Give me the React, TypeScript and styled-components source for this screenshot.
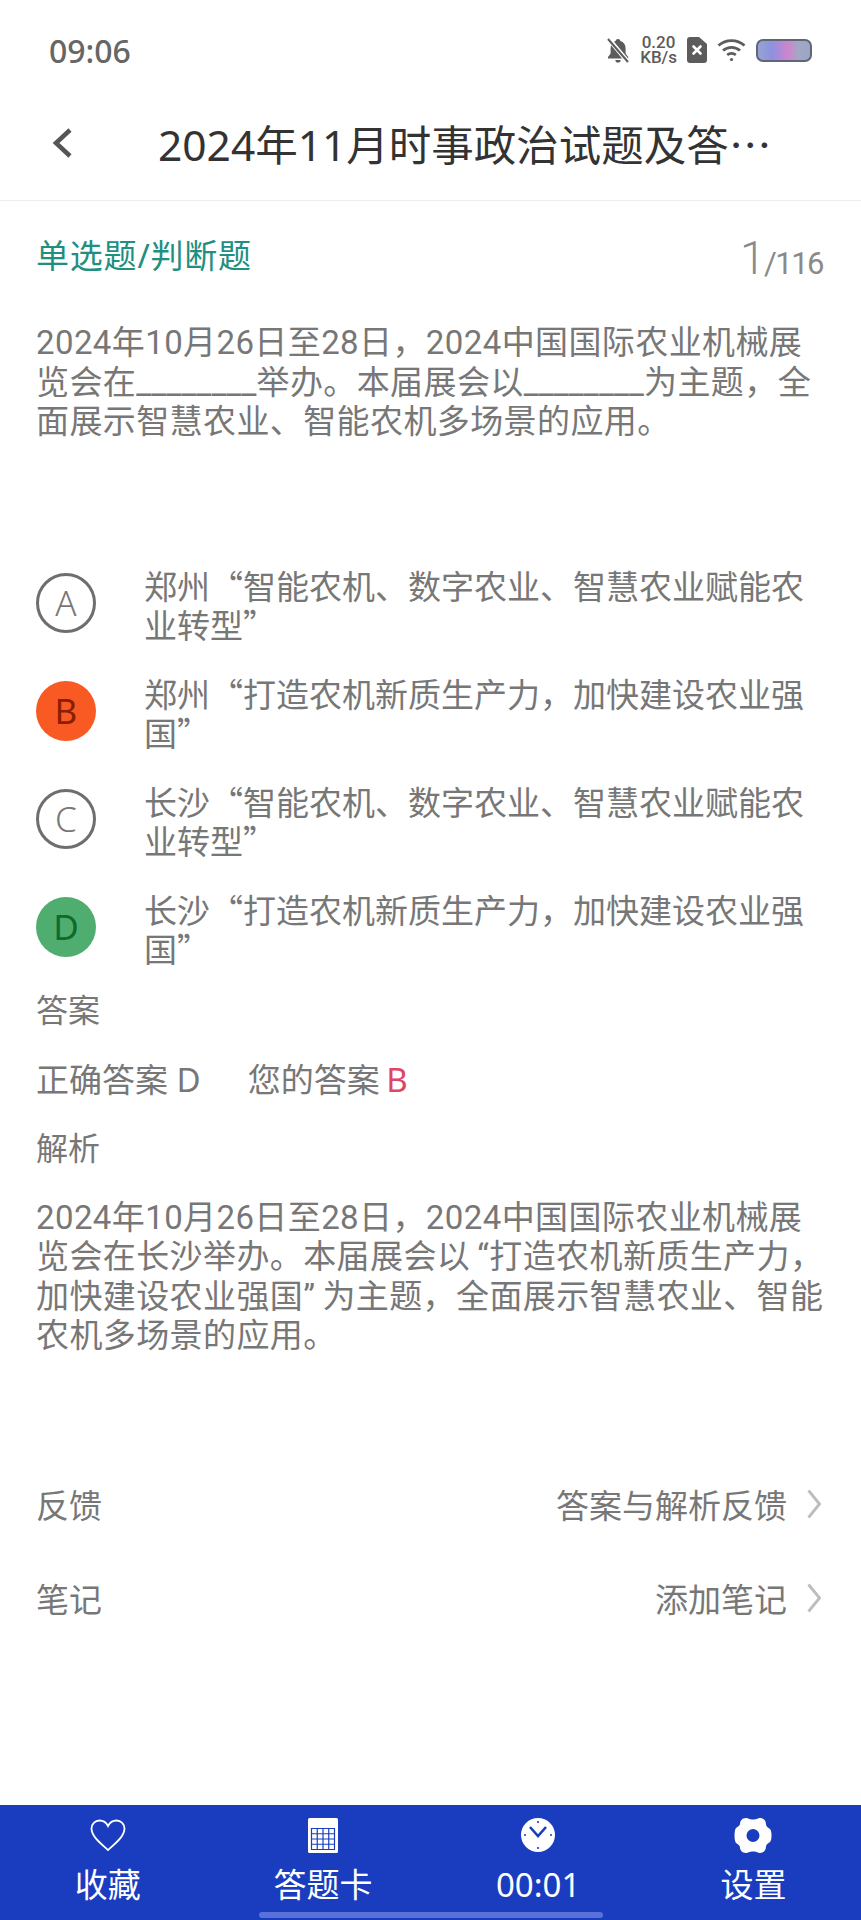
import React from 'react';
import styled, { createGlobalStyle } from 'styled-components';

const options = [
    { key: 'A', text: '郑州“智能农机、数字农业、智慧农业赋能农业转型”', state: 'idle' },
    { key: 'B', text: '郑州“打造农机新质生产力，加快建设农业强国”', state: 'wrong' },
    { key: 'C', text: '长沙“智能农机、数字农业、智慧农业赋能农业转型”', state: 'idle' },
    { key: 'D', text: '长沙“打造农机新质生产力，加快建设农业强国”', state: 'right' },
];

const questionLines = [
    '2024年10月26日至28日，2024中国国际农业机械展',
    '览会在________举办。本届展会以________为主题，全',
    '面展示智慧农业、智能农机多场景的应用。',
];

const analysisLines = [
    '2024年10月26日至28日，2024中国国际农业机械展',
    '览会在长沙举办。本届展会以“打造农机新质生产力，',
    '加快建设农业强国”为主题，全面展示智慧农业、智能',
    '农机多场景的应用。',
];

// the blanks and the quotes have other widths than the plain text around them
const renderLine = (line: string) =>
    line.split(/(_+|“|”)/).map((part, i) => {
        if (part.startsWith('_')) return <Blank key={i}>{part}</Blank>;
        if (part === '“') return <OpenQuote key={i}>{part}</OpenQuote>;
        if (part === '”') return <CloseQuote key={i}>{part}</CloseQuote>;
        return part;
    });

const BellOff = () => (
    <svg width="24" height="27" viewBox="0 0 24 27">
        <path
            fill="#5c5c5c"
            d="M12 2c1.400 0 2.200.8 2.400 2 3.400 1 5.200 3.800 5.200 7.400v5.200l2.600 3.400v1.400H2v-1.400l2.600-3.400v-5.200C4.600 7.800 6.400 5 9.600 4 9.800 2.800 10.600 2 12 2zM9.400 23h5.200a2.600 2.600 0 0 1-5.200 0z"
        />
        <path d="M2 1l20 24" stroke="#fff" strokeWidth="4.500" />
        <path d="M2 2l20 23" stroke="#5c5c5c" strokeWidth="2" />
    </svg>
);

const SimOff = () => (
    <svg width="20" height="26" viewBox="0 0 20 26">
        <path
            fill="#5c5c5c"
            d="M3 0h9l8 7v16a3 3 0 0 1-3 3H3a3 3 0 0 1-3-3V3a3 3 0 0 1 3-3z"
        />
        <path d="M6.500 9.500l7 7m0-7l-7 7" stroke="#fff" strokeWidth="2.600" strokeLinecap="round" />
    </svg>
);

const Wifi = () => (
    <svg width="29" height="24" viewBox="0 0 29 24" fill="none" stroke="#5c5c5c" strokeWidth="2.800">
        <path d="M1.500 7.500c7.500-6.500 18.500-6.500 26 0" />
        <path d="M6 12.500c5-4.300 12-4.300 17 0" />
        <path d="M10.200 17c2.500-2 6.100-2 8.600 0" />
        <circle cx="14.500" cy="21.500" r="1.600" fill="#5c5c5c" stroke="none" />
    </svg>
);

const BackIcon = () => (
    <svg width="22" height="30" viewBox="0 0 22 30" fill="none">
        <path d="M19 2L5 15l14 13" stroke="#555" strokeWidth="4.500" />
    </svg>
);

const ArrowIcon = () => (
    <svg width="14" height="30" viewBox="0 0 14 30" fill="none">
        <path d="M1.500 1.500L12.500 15 1.500 28.500" stroke="#bdbdbd" strokeWidth="2.800" />
    </svg>
);

const HeartIcon = () => (
    <svg width="36" height="33" viewBox="0 0 36 33" fill="none">
        <path
            d="M18 31C10 24 1.500 17 1.500 9.500 1.500 5 5 1.500 9.500 1.500c3.500 0 6.800 2 8.500 5.500 1.700-3.500 5-5.500 8.500-5.500 4.500 0 8 3.500 8 8C34.500 17 26 24 18 31z"
            stroke="#fff"
            strokeWidth="1.800"
        />
    </svg>
);

const GridIcon = () => (
    <svg width="30" height="35" viewBox="0 0 30 35">
        <rect width="30" height="35" rx="1.500" fill="#fff" />
        <path
            fill="none"
            stroke="#1a3dbf"
            strokeWidth="1.200"
            d="M3.500 10.500h23v21h-23zM3.500 15.750h23M3.500 21h23M3.500 26.250h23M9.250 10.500v21M15 10.500v21M20.750 10.500v21"
        />
    </svg>
);

const ClockIcon = () => (
    <svg width="34" height="34" viewBox="0 0 34 34">
        <circle cx="17" cy="17" r="17" fill="#fff" />
        <path d="M9 9l8 9 8-9" fill="none" stroke="#1a3dbf" strokeWidth="2.600" />
        <path d="M17 3v2M17 29v2M3 17h2M29 17h2" stroke="#1a3dbf" strokeWidth="1.600" />
    </svg>
);

const GearIcon = () => (
    <svg width="38" height="37" viewBox="0 0 38 37">
        <path
            fill="#fff"
            fillRule="evenodd"
            d="M12 1c2 0 3 1.500 7 1.500S24 1 26 1c4 0 6 3 6 6.500 0 2 2 3 4 4.500 2 2 2 11 0 13-2 1.500-4 2.500-4 4.500C32 33 30 36 26 36c-2 0-3-1.500-7-1.500S14 36 12 36c-4 0-6-3-6-5.500 0-2-2-3-4-4.500-2-2-2-13 0-15 2-1.500 4-2.500 4-4C6 4 8 1 12 1zM19 12a6.500 6.500 0 1 0 0 13 6.500 6.500 0 0 0 0-13z"
        />
    </svg>
);

const App: React.FC = () => {
    return (
        <Page lang="zh-CN">
            <GlobalStyle />
            <StatusBar>
                <Clock>09:06</Clock>
                <StatusIcons>
                    <BellOff />
                    <Speed>{'0.20\nKB/s'}</Speed>
                    <SimOff />
                    <Wifi />
                    <Battery />
                </StatusIcons>
            </StatusBar>
            <Header>
                <BackIcon />
                <Title>
                    2024年11月时事政治试题及答<TitleDots>…</TitleDots>
                </Title>
            </Header>
            <Main>
                <TypeRow>
                    <TypeLabel>单选题/判断题</TypeLabel>
                    <Count>
                        <CountNow>1</CountNow>/116
                    </Count>
                </TypeRow>
                <Question>
                    {questionLines.map(line => (
                        <TextLine key={line}>{renderLine(line)}</TextLine>
                    ))}
                </Question>
                <OptionList>
                    {options.map(option => (
                        <Option key={option.key}>
                            <Badge $state={option.state}>{option.key}</Badge>
                            <OptionText>{option.text}</OptionText>
                        </Option>
                    ))}
                </OptionList>
                <SectionTitle>答案</SectionTitle>
                <AnswerRow>
                    <span>正确答案 D</span>
                    <span>
                        您的答案 <WrongKey>B</WrongKey>
                    </span>
                </AnswerRow>
                <SectionTitle>解析</SectionTitle>
                <Analysis>
                    {analysisLines.map(line => (
                        <TextLine key={line}>{renderLine(line)}</TextLine>
                    ))}
                </Analysis>
                <LinkRow>
                    <span>反馈</span>
                    <LinkAction>
                        答案与解析反馈
                        <ArrowIcon />
                    </LinkAction>
                </LinkRow>
                <LinkRow>
                    <span>笔记</span>
                    <LinkAction>
                        添加笔记
                        <ArrowIcon />
                    </LinkAction>
                </LinkRow>
            </Main>
            <Footer>
                <FooterItem>
                    <FooterIcon>
                        <HeartIcon />
                    </FooterIcon>
                    收藏
                </FooterItem>
                <FooterItem>
                    <FooterIcon>
                        <GridIcon />
                    </FooterIcon>
                    答题卡
                </FooterItem>
                <FooterItem>
                    <FooterIcon>
                        <ClockIcon />
                    </FooterIcon>
                    00:01
                </FooterItem>
                <FooterItem>
                    <FooterIcon>
                        <GearIcon />
                    </FooterIcon>
                    设置
                </FooterItem>
                <HomeBar />
            </Footer>
        </Page>
    );
};

const GlobalStyle = createGlobalStyle`
    html, body {
        margin: 0;
        padding: 0;
        background: #fff;
    }
    * {
        box-sizing: border-box;
    }
`;

const Page = styled.div`
    display: flex;
    flex-direction: column;
    width: 861px;
    height: 1920px;
    overflow: hidden;
    background: #fff;
    color: #777;
    font-family: 'Noto Sans', 'Noto Sans CJK SC', sans-serif;
    font-size: 33px;
`;

const StatusBar = styled.div`
    display: flex;
    align-items: center;
    justify-content: space-between;
    height: 100px;
    padding: 0 49px;
`;

const Clock = styled.div`
    font-size: 32px;
    font-weight: 500;
    color: #666;
`;

const StatusIcons = styled.div`
    display: flex;
    align-items: center;
    gap: 10px;
`;

const Speed = styled.div`
    color: #5c5c5c;
    font-family: Roboto, sans-serif;
    font-size: 17px;
    font-weight: 500;
    line-height: 15px;
    text-align: center;
    white-space: pre-line;
`;

const Battery = styled.div`
    width: 56px;
    height: 23px;
    border: 2.5px solid #5f6678;
    border-radius: 7px;
    background: linear-gradient(
        90deg,
        #97a3cf 0%,
        #8d92e0 26%,
        #a48cd8 38%,
        #d184cf 58%,
        #a4a6c6 76%,
        #9ca6c2 100%
    );
`;

const Header = styled.div`
    display: flex;
    align-items: center;
    height: 101px;
    padding-left: 51px;
    padding-bottom: 14px;
    border-bottom: 1px solid #ececec;
`;

const Title = styled.div`
    margin-left: 85px;
    margin-top: -2px;
    font-size: 42.5px;
    color: #333;
    white-space: nowrap;
`;

const TitleDots = styled.span`
    font-family: 'Noto Sans CJK SC', sans-serif;
`;

const Main = styled.div`
    display: flex;
    flex: 1;
    flex-direction: column;
    padding: 0 36px;
`;

const TypeRow = styled.div`
    display: flex;
    align-items: flex-start;
    justify-content: space-between;
    height: 122px;
    padding-top: 32px;
`;

const TypeLabel = styled.div`
    color: #1f8f82;
    line-height: 46px;
    letter-spacing: 0.8px;
`;

const Count = styled.div`
    margin: -5px 2px 0 0;
    color: #8a8a8a;
    font-family: Roboto, sans-serif;
    font-size: 31px;
    letter-spacing: -1.5px;
    line-height: 60px;
`;

const CountNow = styled.span`
    font-size: 46px;
    font-weight: 300;
`;

const Question = styled.div`
    line-height: 39.5px;
`;

const TextLine = styled.div`
    font-family: Roboto, 'Noto Sans CJK SC', sans-serif;
    letter-spacing: 0.4px;
    white-space: nowrap;
`;

const Blank = styled.span`
    letter-spacing: 0.15px;
`;

const OpenQuote = styled.span`
    padding-left: 7px;
`;

const CloseQuote = styled.span`
    padding-right: 7px;
`;

const OptionList = styled.div`
    display: flex;
    flex-direction: column;
    gap: 30px;
    margin-top: 124px;
`;

const Option = styled.div`
    display: flex;
    align-items: center;
    height: 78px;
`;

const Badge = styled.div<{ $state: string }>`
    display: flex;
    flex-shrink: 0;
    align-items: center;
    justify-content: center;
    width: 60px;
    height: 60px;
    margin: 0 48px 4px 0;
    border: ${p => (p.$state === 'idle' ? '3.5px solid #6e6e6e' : 'none')};
    border-radius: 50%;
    background: ${p =>
        p.$state === 'wrong' ? '#f95a24' : p.$state === 'right' ? '#4fae6f' : '#fff'};
    color: ${p =>
        p.$state === 'wrong' ? '#8a1e04' : p.$state === 'right' ? '#0f6a2c' : '#777'};
    font-size: 35px;
    font-weight: ${p => (p.$state === 'idle' ? 300 : 400)};
`;

const OptionText = styled.div`
    width: 668px;
    font-family: 'Noto Sans CJK SC', sans-serif;
    line-height: 39px;
`;

const SectionTitle = styled.div`
    height: 40px;
    margin-top: 22px;
    line-height: 40px;
    font-size: 32px;
`;

const AnswerRow = styled.div`
    display: flex;
    gap: 47px;
    height: 40px;
    margin: 30px 0 6px;
    line-height: 40px;
`;

const WrongKey = styled.span`
    margin-left: -2px;
    color: #df4566;
`;

const Analysis = styled.div`
    margin: 30px 0 128px;
    line-height: 39.5px;
`;

const LinkRow = styled.div`
    display: flex;
    align-items: center;
    justify-content: space-between;
    height: 40px;
    margin-bottom: 54px;
    padding-right: 4px;
`;

const LinkAction = styled.div`
    display: flex;
    align-items: center;
    gap: 20px;
`;

const Footer = styled.div`
    position: relative;
    display: grid;
    grid-template-columns: repeat(4, 1fr);
    height: 115px;
    background: #1a3dbf;
`;

const FooterItem = styled.div`
    display: flex;
    flex-direction: column;
    align-items: center;
    color: #fff;
    font-size: 33px;
    line-height: 44px;
`;

const FooterIcon = styled.div`
    display: flex;
    align-items: center;
    justify-content: center;
    height: 36px;
    margin: 12px 0 10px;
`;

const HomeBar = styled.div`
    position: absolute;
    left: 259px;
    bottom: 2px;
    width: 344px;
    height: 6px;
    border-radius: 3px;
    background: #5872d8;
`;

export default App;
